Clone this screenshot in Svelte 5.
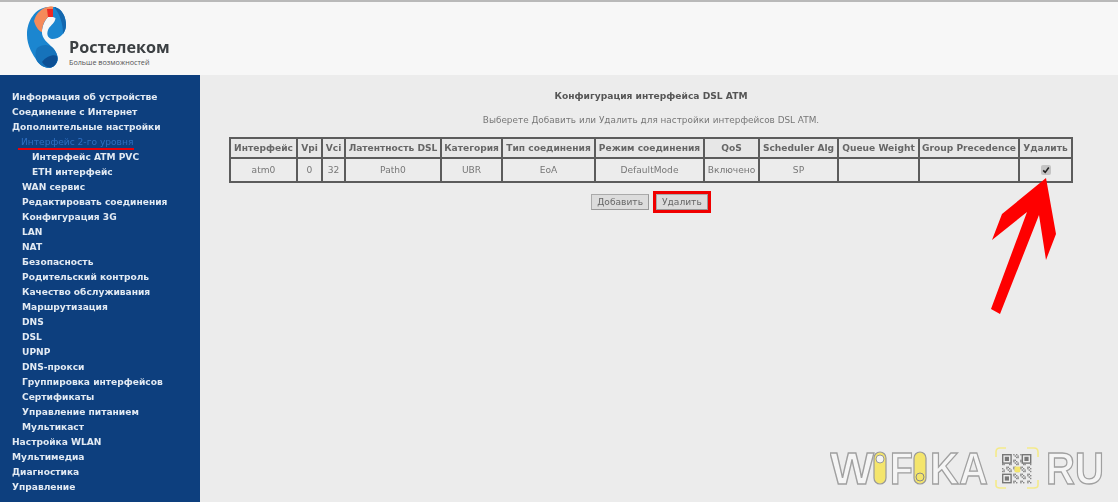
<script>
  const menu = [
    { label: 'Информация об устройстве', level: 1 },
    { label: 'Соединение с Интернет', level: 1 },
    { label: 'Дополнительные настройки', level: 1 },
    { label: 'Интерфейс 2-го уровня', level: 2, active: true },
    { label: 'Интерфейс ATM PVC', level: 3 },
    { label: 'ETH интерфейс', level: 3 },
    { label: 'WAN сервис', level: 2 },
    { label: 'Редактировать соединения', level: 2 },
    { label: 'Конфигурация 3G', level: 2 },
    { label: 'LAN', level: 2 },
    { label: 'NAT', level: 2 },
    { label: 'Безопасность', level: 2 },
    { label: 'Родительский контроль', level: 2 },
    { label: 'Качество обслуживания', level: 2 },
    { label: 'Маршрутизация', level: 2 },
    { label: 'DNS', level: 2 },
    { label: 'DSL', level: 2 },
    { label: 'UPNP', level: 2 },
    { label: 'DNS-прокси', level: 2 },
    { label: 'Группировка интерфейсов', level: 2 },
    { label: 'Сертификаты', level: 2 },
    { label: 'Управление питанием', level: 2 },
    { label: 'Мультикаст', level: 2 },
    { label: 'Настройка WLAN', level: 1 },
    { label: 'Мультимедиа', level: 1 },
    { label: 'Диагностика', level: 1 },
    { label: 'Управление', level: 1 }
  ];

  const columns = [
    { title: 'Интерфейс', width: 67, value: 'atm0' },
    { title: 'Vpi', width: 25, value: '0' },
    { title: 'Vci', width: 23, value: '32' },
    { title: 'Латентность DSL', width: 96, value: 'Path0' },
    { title: 'Категория', width: 61, value: 'UBR' },
    { title: 'Тип соединения', width: 93, value: 'EoA' },
    { title: 'Режим соединения', width: 109, value: 'DefaultMode' },
    { title: 'QoS', width: 55, value: 'Включено' },
    { title: 'Scheduler Alg', width: 79, value: 'SP' },
    { title: 'Queue Weight', width: 81, value: '' },
    { title: 'Group Precedence', width: 100, value: '' },
    { title: 'Удалить', width: 53, check: true }
  ];

  // псевдо QR для водяного знака
  const qr = [];
  for (let y = 0; y < 21; y++) {
    for (let x = 0; x < 21; x++) {
      const finder = (x < 7 && y < 7) || (x > 13 && y < 7) || (x < 7 && y > 13);
      if (finder) continue;
      if ((x * 7 + y * 13 + x * y) % 5 < 2) qr.push({ x, y });
    }
  }
  const finders = [[0, 0], [14, 0], [0, 14]];
</script>

<div class="page">
  <header class="top">
    <svg class="logo-mark" viewBox="0 0 80 75" width="80" height="75">
      <path d="M28 7C15 8 7 21 7 35C7 46 13 55 17 61C21 67 29 70 34 66C40 61 38 54 33 48C27 42 21 38 22 30C23 24 25 20 28 17L36 17L36 7Z" fill="#1b86d0"/>
      <path d="M17 48C22 44 29 44 33 48C38 54 40 61 34 66C29 70 21 67 17 61C15 57 15 52 17 48Z" fill="#1673bb"/>
      <path d="M22 62C26 56 34 54 37 56C38 60 37 63 34 66C30 69 25 67 22 62Z" fill="#0c4f94"/>
      <path d="M28 7C22 8 16 13 14 21C16 28 20 32 22 32C22 25 25 20 28 17L34 17L34 7C32 6 30 6 28 7Z" fill="#f58a5a"/>
      <path d="M27 9L33 9L34 17L28 17Z" fill="#ee2a24"/>
      <path d="M33 7C42 8 46 17 46 25C46 33 40 39 32 39C27 38 26 33 29 28C31 25 35 23 35.5 18L33 17Z" fill="#1b86d0"/>
      <path d="M34 7C42 8 46 17 46 25C46 28 45 31 43 34C43 24 40 14 34 7Z" fill="#1467ae"/>
    </svg>
    <div class="brand">
      <span class="brand-name">Ростелеком</span>
      <span class="brand-sub">Больше возможностей</span>
    </div>
  </header>

  <div class="layout">
    <nav class="sidebar">
      {#each menu as item}
        <div class="item level{item.level}">
          {#if item.active}
            <span class="current">{item.label}</span>
          {:else}
            {item.label}
          {/if}
        </div>
      {/each}
    </nav>

    <main class="content">
      <h1>Конфигурация интерфейса DSL ATM</h1>
      <p>Выберете Добавить или Удалить для настройки интерфейсов DSL ATM.</p>

      <table>
        <colgroup>
          {#each columns as col}
            <col style="width: {col.width}px" />
          {/each}
        </colgroup>
        <thead>
          <tr>
            {#each columns as col}
              <th>{col.title}</th>
            {/each}
          </tr>
        </thead>
        <tbody>
          <tr>
            {#each columns as col}
              <td>
                {#if col.check}
                  <span class="check">
                    <svg viewBox="0 0 10 10" width="8" height="8">
                      <path d="M1.5 5.5L4 8L8.5 2" fill="none" stroke="#222" stroke-width="2"/>
                    </svg>
                  </span>
                {:else}
                  {col.value}
                {/if}
              </td>
            {/each}
          </tr>
        </tbody>
      </table>

      <div class="buttons">
        <button>Добавить</button>
        <span class="marked"><button>Удалить</button></span>
      </div>
    </main>
  </div>

  <!-- стрелка поверх скриншота -->
  <svg class="arrow" viewBox="0 0 100 160" width="100" height="160">
    <polygon points="66,8 76,64 66,90 59,45 20,144 11,139 47,42 12,70 22,44" fill="#fe0000"/>
  </svg>

  <svg class="watermark" viewBox="0 -8 288 58" width="288" height="58">
    <g class="wm-text">
      <text transform="translate(0 37) scale(1.06 1)">W</text>
      <text transform="translate(60 37) scale(0.85 1)">F</text>
      <text transform="translate(100 37) scale(0.91 1)">KA</text>
      <text transform="translate(216 37) scale(0.91 1)">RU</text>
    </g>
    <g>
      <rect x="44" y="5" width="12" height="32" rx="6" fill="#f4e56c" stroke="#999" stroke-width="1.2"/>
      <circle cx="50" cy="12" r="4" fill="#f5f5f5" stroke="#999"/>
      <rect x="84" y="5" width="12" height="32" rx="6" fill="#f4e56c" stroke="#999" stroke-width="1.2"/>
      <circle cx="90" cy="30" r="4" fill="#f4e56c" stroke="#888"/>
    </g>
    <path d="M166 10V5Q166 1 170 1H176M197 1H204Q208 1 208 5V10M208 33V38Q208 41 204 41H197M176 41H170Q166 41 166 38V33" fill="none" stroke="#f4ea8a" stroke-width="1.6"/>
    <g transform="translate(172 7) scale(1.4)">
      {#each qr as cell}
        <rect x={cell.x} y={cell.y} width="1" height="1" fill="#888"/>
      {/each}
      {#each finders as f}
        <rect x={f[0] + 0.5} y={f[1] + 0.5} width="6" height="6" fill="none" stroke="#777" stroke-width="1"/>
        <rect x={f[0] + 2} y={f[1] + 2} width="3" height="3" fill="#777"/>
      {/each}
      <rect x="9" y="9" width="4" height="4" fill="#f4e56c"/>
    </g>
  </svg>
</div>

<style>
  :global(body) {
    margin: 0;
    background: #ececec;
    font-family: "DejaVu Sans", Verdana, sans-serif;
  }

  .page {
    position: relative;
    width: 1118px;
    height: 502px;
    overflow: hidden;
  }

  /* Шапка с логотипом */
  .top {
    height: 73px;
    background: #f7f7f7;
    border-top: 2px solid #b9b9b9;
    display: flex;
    position: relative;
  }

  .logo-mark {
    margin-left: 20px;
    margin-top: -2px;
    flex-shrink: 0;
    filter: blur(0.4px);
  }

  .brand {
    display: flex;
    flex-direction: column;
    margin-left: -31px;
    padding-top: 34px;
  }

  .brand-name {
    font-family: "Open Sans", sans-serif;
    font-weight: 700;
    font-size: 16.2px;
    line-height: 22px;
    color: #3c4043;
    white-space: nowrap;
    filter: blur(0.3px);
  }

  .brand-sub {
    font-family: "Open Sans", sans-serif;
    font-size: 7.2px;
    line-height: 9px;
    color: #555;
    white-space: nowrap;
  }

  .layout {
    display: flex;
    height: 427px;
  }

  /* Левое меню */
  .sidebar {
    width: 200px;
    flex-shrink: 0;
    background: #0d3f7e;
    padding-top: 15px;
    box-sizing: border-box;
    font-size: 9.1px;
    font-weight: 700;
    color: #e2eaf3;
  }

  .item {
    height: 15px;
    line-height: 15px;
    white-space: nowrap;
    filter: blur(0.3px);
  }

  .level1 {
    padding-left: 12px;
  }

  .level2 {
    padding-left: 22px;
  }

  .level3 {
    padding-left: 32px;
  }

  .current {
    display: inline-block;
    height: 12px;
    line-height: 12px;
    margin-left: -4px;
    padding: 0 1px 0 3px;
    border-bottom: 2px solid #e8000a;
    color: #2f6fc0;
    font-weight: 400;
  }

  /* Основная часть */
  .content {
    flex: 1;
    margin-top: 2px;
    padding: 0 46px 0 29px;
    text-align: center;
    color: #666;
    font-size: 9.1px;
    filter: blur(0.3px);
  }

  h1 {
    margin: 0;
    padding-top: 13px;
    font-size: 9.15px;
    line-height: 12px;
    font-weight: 700;
    color: #555;
  }

  p {
    margin: 12px 0 0;
    line-height: 12px;
    font-size: 8.9px;
    color: #777;
  }

  table {
    width: 842px;
    margin-top: 11px;
    border-collapse: collapse;
    table-layout: fixed;
    border: 2px solid #5c5c5c;
  }

  th,
  td {
    border: 2px solid #5c5c5c;
    padding: 0;
    white-space: nowrap;
    overflow: hidden;
  }

  th {
    height: 18px;
    background: #e7e7e7;
    font-weight: 700;
    color: #666;
  }

  td {
    height: 22px;
    color: #777;
  }

  .check {
    display: inline-flex;
    align-items: center;
    justify-content: center;
    width: 10px;
    height: 10px;
    background: #c4c4c4;
    border-radius: 2px;
    vertical-align: middle;
  }

  .buttons {
    display: flex;
    justify-content: center;
    align-items: center;
    gap: 4px;
    margin-top: 8px;
  }

  button {
    height: 16px;
    padding: 0 5px;
    background: #dcdcdc;
    border: 1px solid #aaa;
    border-right-color: #999;
    border-bottom-color: #999;
    color: #666;
    font-family: "DejaVu Sans", sans-serif;
    font-size: 9.1px;
    line-height: 14px;
  }

  .marked {
    display: flex;
    border: 3px solid #f00000;
  }

  .arrow {
    position: absolute;
    left: 980px;
    top: 170px;
  }

  .watermark {
    position: absolute;
    left: 830px;
    top: 439px;
    filter: blur(0.3px);
  }

  .wm-text {
    font-family: "Liberation Sans", sans-serif;
    font-weight: 700;
    font-size: 44px;
    fill: #f5f5f5;
    stroke: #a0a0a0;
    stroke-width: 1.3;
  }
</style>
